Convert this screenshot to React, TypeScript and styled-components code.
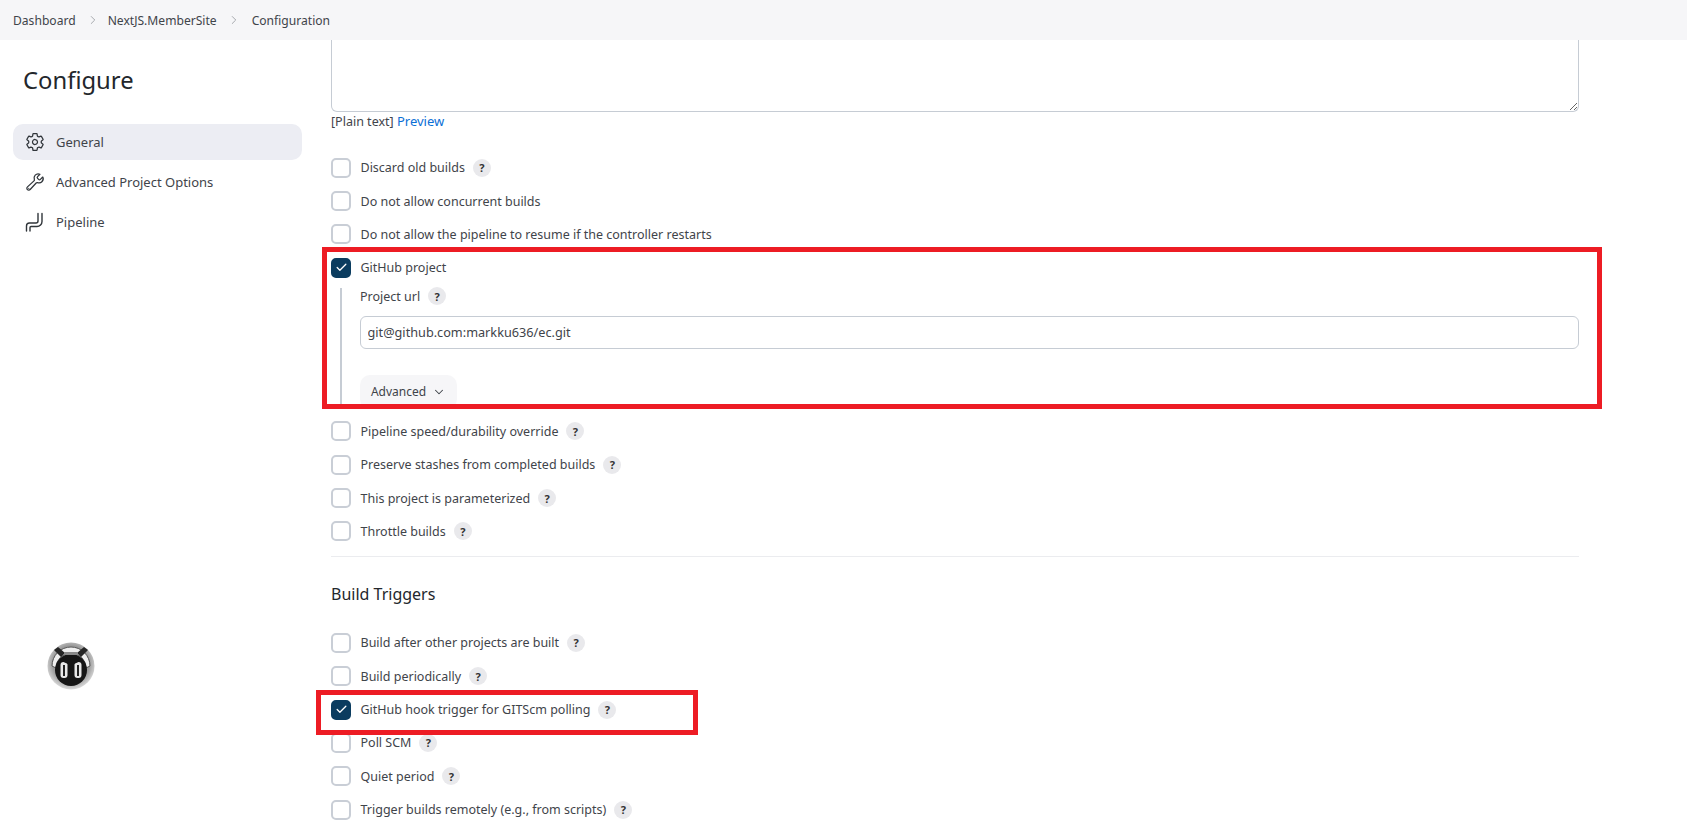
import React from "react";
import styled, { createGlobalStyle } from "styled-components";
import { Check, ChevronRight, ChevronDown } from "lucide-react";
import { IoSettingsOutline, IoBuildOutline } from "react-icons/io5";

const Global = createGlobalStyle`
  html, body { margin: 0; padding: 0; background: #fff; }
  body { font-family: "Noto Sans", "Open Sans", sans-serif; color: #3f444a; font-size: 12.5px; }
  #root { height: 838px; overflow: hidden; }
`;

const Page = styled.div`
  display: flex;
  flex-direction: column;
  height: 838px;
  overflow: hidden;
`;
const TopBar = styled.nav`
  flex: 0 0 40px;
  display: flex;
  align-items: center;
  padding-left: 13px;
  background: #f6f6f8;
`;
const Crumb = styled.span`
  font-size: 12.1px;
  color: #3f444a;
`;
const CrumbSep = styled.span<{ $after: number }>`
  display: flex;
  margin: 0 ${(p) => p.$after}px 0 10px;
  color: #8d9196;
`;
const Body = styled.div`
  flex: 1;
  display: flex;
  min-height: 0;
`;
const Sidebar = styled.aside`
  flex: 0 0 331px;
  box-sizing: border-box;
  padding: 0 29px 0 13px;
  display: flex;
  flex-direction: column;
`;
const Title = styled.h1`
  margin: 20px 0 0 10px;
  height: 40px;
  line-height: 40px;
  font-size: 23.8px;
  font-weight: 400;
  color: #23272c;
`;
const Nav = styled.ul`
  list-style: none;
  margin: 24px 0 0;
  padding: 0;
  display: flex;
  flex-direction: column;
  gap: 4px;
`;
const NavItem = styled.li<{ $active?: boolean }>`
  height: 36px;
  display: flex;
  align-items: center;
  gap: 11px;
  padding-left: 12px;
  border-radius: 10px;
  font-size: 13px;
  color: #3f444a;
  background: ${(p) => (p.$active ? "#ecedf3" : "transparent")};
  svg { flex: 0 0 20px; color: #30353a; }
`;
const Avatar = styled.svg`
  display: block;
  margin: 402px 0 0 34px;
`;
const Main = styled.main`
  position: relative;
  width: 1248px;
`;
const Description = styled.textarea`
  display: block;
  box-sizing: border-box;
  width: 100%;
  height: 72px;
  border: 1.5px solid #c6ccd4;
  border-top: none;
  border-radius: 0 0 6px 6px;
  background: #fff;
  resize: vertical;
  outline: none;
`;
const FormatRow = styled.div`
  height: 18px;
  line-height: 18px;
  font-size: 12.5px;
  white-space: pre;
`;
const PreviewLink = styled.a`
  font-size: 13px;
  color: #0b6fd6;
`;
const Rows = styled.div<{ $top: number }>`
  margin-top: ${(p) => p.$top}px;
  display: flex;
  flex-direction: column;
`;
const Row = styled.div`
  height: 33.4px;
  display: flex;
  align-items: center;
  font-size: 12.5px;
`;
const Box = styled.span<{ $on?: boolean }>`
  box-sizing: border-box;
  flex: 0 0 20px;
  width: 20px;
  height: 20px;
  margin-right: 9.500px;
  border-radius: 5px;
  display: flex;
  align-items: center;
  justify-content: center;
  border: 2px solid ${(p) => (p.$on ? "#0b3c5f" : "#c9ced6")};
  background: ${(p) => (p.$on ? "#0b3c5f" : "#fff")};
  color: #fff;
`;
const Help = styled.span`
  margin-left: 8px;
  width: 18px;
  height: 18px;
  border-radius: 50%;
  background: #e9e9ec;
  display: inline-flex;
  align-items: center;
  justify-content: center;
  font-size: 11px;
  font-weight: 700;
  color: #333;
`;
const Nested = styled.div`
  margin: 3px 0 6px 9px;
  padding-left: 18px;
  border-left: 2px solid #c6ccd4;
  height: 121px;
  display: flex;
  flex-direction: column;
`;
const FieldLabel = styled.div`
  height: 20px;
  margin-top: -1px;
  display: flex;
  align-items: center;
  font-size: 12.5px;
`;
const UrlInput = styled.input`
  box-sizing: border-box;
  margin-top: 10px;
  width: 100%;
  height: 33px;
  border: 1.5px solid #c6ccd4;
  border-radius: 6px;
  padding: 0 6.500px;
  font: inherit;
  font-size: 12.7px;
  color: #3f444a;
  outline: none;
`;
const AdvancedButton = styled.button`
  margin-top: 26px;
  width: 97px;
  height: 34px;
  flex: 0 0 34px;
  border: none;
  border-radius: 10px;
  background: #f6f6f8;
  font: inherit;
  font-size: 12px;
  color: #3f444a;
  display: flex;
  align-items: center;
  justify-content: center;
  gap: 6px;
  padding: 0;
`;
const Divider = styled.hr`
  margin: 8px 0 0;
  border: none;
  height: 1px;
  background: #ebecef;
`;
const Section = styled.h2`
  margin: 26px 0 0;
  height: 22px;
  line-height: 22px;
  font-size: 16px;
  font-weight: 400;
  color: #23272c;
`;
const Callout = styled.div<{ $x: number; $y: number; $w: number; $h: number }>`
  position: absolute;
  box-sizing: border-box;
  left: ${(p) => p.$x}px;
  top: ${(p) => p.$y}px;
  width: ${(p) => p.$w}px;
  height: ${(p) => p.$h}px;
  border: 5px solid #ed1c24;
  pointer-events: none;
`;

const PipelineIcon = () => (
  <svg width="20" height="20" viewBox="0 0 20 20" fill="none" stroke="#30353a" strokeWidth="1.400" strokeLinecap="round" strokeLinejoin="round">
    <path d="M1.500 19v-5a3 3 0 0 1 3-3h6.500a2 2 0 0 0 2-2V1.500" />
    <path d="M5 19v-3.500a1 1 0 0 1 1-1h6a5 5 0 0 0 5-5V1.500" />
  </svg>
);

const Ticked = () => (
  <Box $on>
    <Check size={13} strokeWidth={2.4} />
  </Box>
);

const Option = ({ label, help = true, on = false }: { label: string; help?: boolean; on?: boolean }) => (
  <Row>
    {on ? <Ticked /> : <Box />}
    <span>{label}</span>
    {help && <Help>?</Help>}
  </Row>
);

export default function App() {
  return (
    <Page>
      <Global />
      <TopBar>
        <Crumb>Dashboard</Crumb>
        <CrumbSep $after={8}><ChevronRight size={14} strokeWidth={1.3} /></CrumbSep>
        <Crumb>NextJS.MemberSite</Crumb>
        <CrumbSep $after={11}><ChevronRight size={14} strokeWidth={1.3} /></CrumbSep>
        <Crumb>Configuration</Crumb>
      </TopBar>
      <Body>
        <Sidebar>
          <Title>Configure</Title>
          <Nav>
            <NavItem $active><IoSettingsOutline size={20} />General</NavItem>
            <NavItem><IoBuildOutline size={20} />Advanced Project Options</NavItem>
            <NavItem><PipelineIcon />Pipeline</NavItem>
          </Nav>
          <Avatar width="48" height="48" viewBox="0 0 48 48">
            <defs>
              <radialGradient id="shell" cx="50%" cy="45%" r="55%">
                <stop offset="70%" stopColor="#9a9a9a" />
                <stop offset="100%" stopColor="#dcdcdc" />
              </radialGradient>
            </defs>
            <circle cx="24" cy="24" r="23.500" fill="url(#shell)" />
            <path d="M5 24a19 19 0 0 1 38 0l-4 2a15 15 0 0 0-30 0z" fill="#efefef" stroke="#555" strokeWidth="1" />
            <circle cx="24" cy="28" r="16" fill="#161616" />
            <path d="M7 8l4-3 7 6-4 4zM41 8l-4-3-7 6 4 4z" fill="#262626" />
            <path d="M17 10h14v3H17z" fill="#8a8a8a" />
            <rect x="13.500" y="20" width="7" height="16" rx="3" fill="#e8e8e8" />
            <rect x="27.500" y="20" width="7" height="16" rx="3" fill="#e8e8e8" />
            <path d="M12 18l9 4v-3l-7-3zM36 18l-9 4v-3l7-3z" fill="#161616" />
            <rect x="16" y="23" width="2" height="11" fill="#222" />
            <rect x="30" y="23" width="2" height="11" fill="#222" />
          </Avatar>
        </Sidebar>
        <Main>
          <Description readOnly />
          <FormatRow>[Plain text] <PreviewLink>Preview</PreviewLink></FormatRow>
          <Rows $top={21}>
            <Option label="Discard old builds" />
            <Option label="Do not allow concurrent builds" help={false} />
            <Option label="Do not allow the pipeline to resume if the controller restarts" help={false} />
            <Option label="GitHub project" help={false} on />
            <Nested>
              <FieldLabel>Project url<Help>?</Help></FieldLabel>
              <UrlInput readOnly value="git@github.com:markku636/ec.git" />
              <AdvancedButton>Advanced<ChevronDown size={14} strokeWidth={1.8} /></AdvancedButton>
            </Nested>
            <Option label="Pipeline speed/durability override" />
            <Option label="Preserve stashes from completed builds" />
            <Option label="This project is parameterized" />
            <Option label="Throttle builds" />
          </Rows>
          <Divider />
          <Section>Build Triggers</Section>
          <Rows $top={21}>
            <Option label="Build after other projects are built" />
            <Option label="Build periodically" />
            <Option label="GitHub hook trigger for GITScm polling" on />
            <Option label="Poll SCM" />
            <Option label="Quiet period" />
            <Option label="Trigger builds remotely (e.g., from scripts)" />
          </Rows>
          <Callout $x={-9} $y={207} $w={1280} $h={162} />
          <Callout $x={-15} $y={650} $w={382} $h={45} />
        </Main>
      </Body>
    </Page>
  );
}
